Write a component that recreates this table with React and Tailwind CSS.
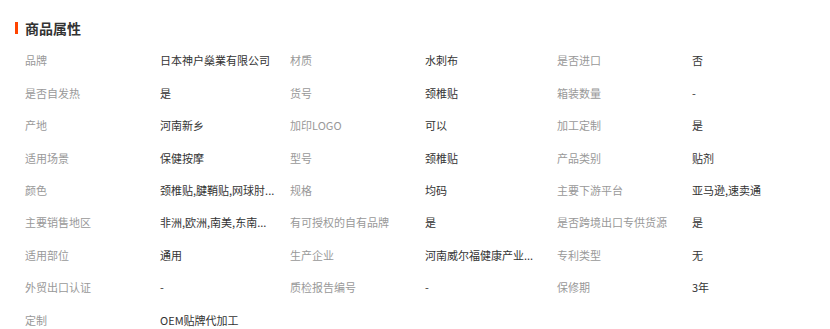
import React from 'react'

const rows = [
  ['品牌', '日本神户燊業有限公司', '材质', '水刺布', '是否进口', '否'],
  ['是否自发热', '是', '货号', '颈椎贴', '箱装数量', '-'],
  ['产地', '河南新乡', '加印LOGO', '可以', '加工定制', '是'],
  ['适用场景', '保健按摩', '型号', '颈椎贴', '产品类别', '贴剂'],
  ['颜色', '颈椎贴,腱鞘贴,网球肘...', '规格', '均码', '主要下游平台', '亚马逊,速卖通'],
  ['主要销售地区', '非洲,欧洲,南美,东南...', '有可授权的自有品牌', '是', '是否跨境出口专供货源', '是'],
  ['适用部位', '通用', '生产企业', '河南威尔福健康产业...', '专利类型', '无'],
  ['外贸出口认证', '-', '质检报告编号', '-', '保修期', '3年'],
  ['定制', 'OEM贴牌代加工'],
]

function App() {
  return (
    <div
      className="min-h-screen bg-white pt-4 pl-[15px]"
      style={{ fontFamily: '"Noto Sans CJK SC", "Noto Sans", sans-serif' }}
    >
      <div className="flex items-center h-6">
        <span className="w-[3px] h-3 bg-[#ff4400]" />
        <span className="ml-[7px] text-[14px] font-bold text-[#333]">商品属性</span>
      </div>

      <div className="mt-[4.5px] pl-[10px]">
        {rows.map((row, i) => (
          <div
            key={i}
            className="grid grid-cols-[135px_130px_135px_132px_135px_1fr] h-[32.4px] items-center text-[11px]"
          >
            {row.map((cell, j) => (
              <span
                key={j}
                className={`whitespace-nowrap ${j % 2 === 0 ? 'text-[#999]' : 'text-[#333]'}`}
              >
                {cell}
              </span>
            ))}
          </div>
        ))}
      </div>
    </div>
  )
}

export default App
